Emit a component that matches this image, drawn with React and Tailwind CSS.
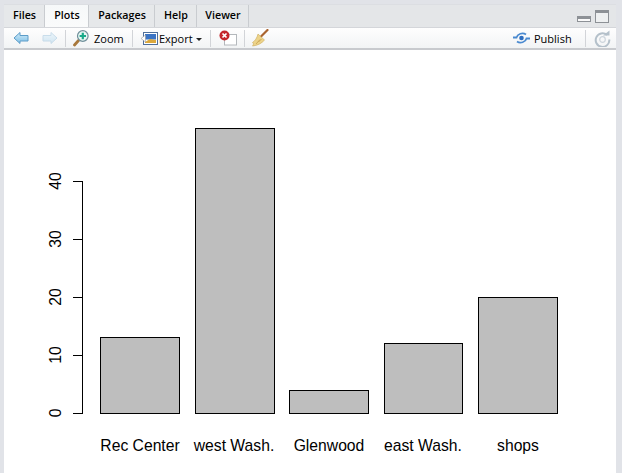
const tabs = [
  { label: "Files", w: "w-[41px]" },
  { label: "Plots", w: "w-[44px]", active: true },
  { label: "Packages", w: "w-[66px]" },
  { label: "Help", w: "w-[42px]" },
  { label: "Viewer", w: "w-[52px]" },
];

const bars = [
  { x: 100.5, w: 79, top: 337.5, label: "Rec Center", cx: 140 },
  { x: 195.5, w: 79, top: 128.5, label: "west Wash.", cx: 234 },
  { x: 289.5, w: 79, top: 390.5, label: "Glenwood", cx: 329 },
  { x: 384.5, w: 78, top: 343.5, label: "east Wash.", cx: 423 },
  { x: 478.5, w: 79, top: 297.5, label: "shops", cx: 518 },
];

const ticks = [
  { y: 413.5, t: "0" },
  { y: 355.5, t: "10" },
  { y: 297.5, t: "20" },
  { y: 239.5, t: "30" },
  { y: 181.5, t: "40" },
];

function Arrow({ flip, faded }) {
  return (
    <svg width="16" height="14" viewBox="0 0 16 14" className={faded ? "opacity-30" : ""}>
      <defs>
        <linearGradient id={flip ? "af" : "ab"} x1="0" y1="0" x2="0" y2="1">
          <stop offset="0" stopColor="#d3ecf9" />
          <stop offset="1" stopColor="#7dbfe6" />
        </linearGradient>
      </defs>
      <path
        d="M1 7 L7 1.5 V4.5 H15 V10 H7 V12.5 Z"
        transform={flip ? "translate(16 0) scale(-1 1)" : undefined}
        fill={`url(#${flip ? "af" : "ab"})`}
        stroke="#5c9cc8"
        strokeWidth="1"
        strokeLinejoin="round"
      />
    </svg>
  );
}

function Sep() {
  return <div className="w-px h-[17px] bg-[#d2d4d8]" />;
}

function ZoomIcon() {
  return (
    <svg width="16" height="17" viewBox="0 0 16 17">
      <path d="M5.5 10.5 L1.5 15" stroke="#a8783c" strokeWidth="2.8" strokeLinecap="round" />
      <circle cx="9.8" cy="6" r="5.3" fill="#e6f6f3" stroke="#6f8f9a" strokeWidth="1.2" />
      <path d="M9.8 2.8 V9.2 M6.6 6 H13" stroke="#19a98a" strokeWidth="2.2" />
    </svg>
  );
}

function ExportIcon() {
  return (
    <svg width="17" height="15" viewBox="0 0 17 15">
      <rect x="2.5" y="1.5" width="14" height="12" fill="#fff" stroke="#4f6f9a" />
      <rect x="4" y="3" width="11" height="5.5" fill="#3b74c4" />
      <path d="M4 11 L9 8 L15 9 V12 H4 Z" fill="#dba83c" />
      <path d="M0 7.5 L4.5 4 V11 Z" fill="#fff" stroke="#888" strokeWidth="0.5" />
    </svg>
  );
}

function ClearIcon() {
  return (
    <svg width="18" height="16" viewBox="0 0 18 16">
      <rect x="5.5" y="4.5" width="12" height="10.5" fill="#fff" stroke="#b4b8bc" />
      <circle cx="5.5" cy="5.5" r="5" fill="#c4252b" />
      <path d="M3.5 3.5 L7.5 7.5 M7.5 3.5 L3.5 7.5" stroke="#fff" strokeWidth="1.7" />
    </svg>
  );
}

function BroomIcon() {
  return (
    <svg width="17" height="18" viewBox="0 0 17 18">
      <path d="M9 7.5 L15.5 1" stroke="#a9632f" strokeWidth="2.2" strokeLinecap="round" />
      <path d="M6 5 L12.5 11 C10 14 6 16.5 0.5 17 C2 15.5 1.5 14 0.5 13.5 C3 12 5 9 6 5 Z" fill="#ecd38a" stroke="#cbaa58" strokeWidth="0.6" />
      <path d="M6.5 13 L9.5 10 M4 15 L8 10.5" stroke="#c19a45" strokeWidth="0.7" />
    </svg>
  );
}

function PublishIcon() {
  return (
    <svg width="17" height="12" viewBox="0 0 17 12">
      <circle cx="8.5" cy="6" r="2.3" fill="#2f6fc0" />
      <path d="M0 5.5 H3.5 C4.5 2 9.5 0 13 2.5" fill="none" stroke="#4a8ad0" strokeWidth="1.8" />
      <path d="M17 6.5 H13.5 C12.5 10 7.5 12 4 9.5" fill="none" stroke="#4a8ad0" strokeWidth="1.8" />
    </svg>
  );
}

function RefreshIcon() {
  return (
    <svg width="17" height="17" viewBox="0 0 17 17">
      <path d="M13 5 A6.8 6.8 0 1 0 15.3 9.5" fill="none" stroke="#b4c0ca" strokeWidth="2" />
      <path d="M9 5.5 H15.5 V0.5 Z" fill="#b4c0ca" />
      <circle cx="8.5" cy="9.5" r="2.8" fill="none" stroke="#cdd5dc" strokeWidth="1.2" />
    </svg>
  );
}

export default function App() {
  return (
    <div className="w-[622px] h-[473px] overflow-hidden bg-[#e1e3e8] pt-[4px] pl-[4px] pr-[6px] flex flex-col font-['Open_Sans','Liberation_Sans',sans-serif] text-[11px] text-black">
      <div className="h-[23px] shrink-0 flex items-end bg-[#e4e6e8] border-t border-[#dcdee2]">
        <div className="flex h-[22px]">
          {tabs.map((t) => (
            <div
              key={t.label}
              className={`${t.w} flex items-center justify-center pl-[1px] pb-[1px] text-[10.7px] font-semibold border-r border-[#c9ccd0] ${
                t.active ? "bg-gradient-to-b from-[#f6f8f9] to-[#fafbfb]" : "bg-[#e6e8ea]"
              }`}
            >
              {t.label}
            </div>
          ))}
        </div>
        <div className="flex-1 h-full flex items-start justify-end gap-[4px] pr-[7px]">
          <div className="w-[14px] h-[6px] mt-[11px] bg-[#fafafa] border border-[#8d9196] border-t-[3px]" />
          <div className="w-[14px] h-[13px] mt-[5px] bg-[#eef0f1] border border-[#8d9196] border-t-[3px]" />
        </div>
      </div>
      <div className="h-[23px] shrink-0 flex items-center bg-gradient-to-b from-[#fefefe] to-[#f2f4f5] border-t border-[#d4d6da] border-b-2 border-b-[#c8cace] pl-[9px] pr-[5px]">
        <Arrow />
        <div className="ml-[13px]"><Arrow flip faded /></div>
        <div className="ml-[7px]"><Sep /></div>
        <div className="ml-[7px] flex items-center gap-[5px]">
          <ZoomIcon />
          <span className="mt-[2px] w-[29px]">Zoom</span>
        </div>
        <div className="ml-[9px]"><Sep /></div>
        <div className="ml-[8px] flex items-center gap-[1px]">
          <ExportIcon />
          <span className="mt-[2px] w-[33px]">Export</span>
          <span className="ml-[3px] mt-[2px] w-0 h-0 border-x-[3px] border-x-transparent border-t-[3px] border-t-[#222]" />
        </div>
        <div className="ml-[8px]"><Sep /></div>
        <div className="ml-[8px]"><ClearIcon /></div>
        <div className="ml-[7px]"><Sep /></div>
        <div className="ml-[7px]"><BroomIcon /></div>
        <div className="ml-auto flex items-center gap-[4px]">
          <PublishIcon />
          <span className="mt-[2px] w-[38px]">Publish</span>
        </div>
        <div className="ml-[13px]"><Sep /></div>
        <div className="ml-[8px]"><RefreshIcon /></div>
      </div>
      <div className="flex-1 bg-white min-h-0">
        <svg width="612" height="423" viewBox="4 50 612 423" className="block font-['Liberation_Sans',sans-serif]">
          {bars.map((b) => (
            <g key={b.label}>
              <rect x={b.x} y={b.top} width={b.w} height={413.5 - b.top} fill="#bebebe" stroke="#000" strokeWidth="1" />
              <text x={b.cx} y={451} textAnchor="middle" fontSize="15.7" fill="#000">{b.label}</text>
            </g>
          ))}
          <path d="M82.5 181 V414" stroke="#000" fill="none" />
          {ticks.map((t) => (
            <g key={t.t}>
              <path d={`M73 ${t.y} H83`} stroke="#000" />
              <text transform={`translate(60.5 ${t.y - 0.5}) rotate(-90)`} textAnchor="middle" fontSize="15.7" fill="#000">{t.t}</text>
            </g>
          ))}
        </svg>
      </div>
    </div>
  );
}
